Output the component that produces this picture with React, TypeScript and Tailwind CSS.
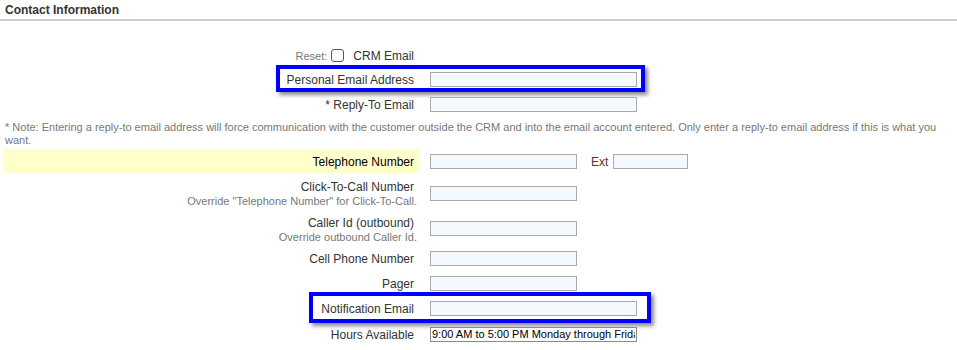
import React from "react";

const inputBase =
  "block h-[15px] border border-[#a9a9a9] bg-[#f4f9fd] outline-none";

function Field({ w = 207 }: { w?: number }) {
  return (
    <input
      className={inputBase + (w === 207 ? " w-[207px]" : w === 147 ? " w-[147px]" : " w-[75px]")}
    />
  );
}

function Row({
  label,
  sub,
  children,
  className = "",
  labelClass = "text-[#333]",
  yellow = false,
}: {
  label: React.ReactNode;
  sub?: string;
  children?: React.ReactNode;
  className?: string;
  labelClass?: string;
  yellow?: boolean;
}) {
  return (
    <div className={"relative flex items-center " + className}>
      <div
        className={
          "w-[417px] h-full flex flex-col justify-center items-end pr-[6px] pt-[2px] " +
          (yellow ? "bg-[#ffffcc]" : "")
        }
      >
        <div className={"text-[12px] leading-[14px] " + labelClass}>{label}</div>
        {sub && (
          <div className="text-[11px] leading-[14px] text-[#777] mr-[-3px]">{sub}</div>
        )}
      </div>
      <div className="ml-[10px] flex items-center">{children}</div>
    </div>
  );
}

function BlueBox({ className }: { className: string }) {
  return (
    <div
      className={
        "absolute pointer-events-none border-[4px] border-[#0000ff] shadow-[3px_3px_4px_rgba(0,0,0,0.45)] " +
        className
      }
    />
  );
}

export default function App() {
  return (
    <div className="w-[957px] h-[350px] bg-white overflow-hidden font-['Liberation_Sans',Arial,sans-serif]">
      <div className="border-b-2 border-[#cccccc] h-[21px] pl-[5px] pt-[3px]">
        <div className="text-[12px] leading-[14px] font-bold text-[#333]">Contact Information</div>
      </div>

      <div className="pl-[3px] mt-[25px]">
        <div className="relative flex items-center h-[18px]">
          <div className="w-[417px] h-full flex items-center justify-end pr-[6px] pt-[2px]">
            <span className="text-[11px] text-[#777]">Reset:</span>
            <span className="ml-[4px] mb-[2px] w-[13px] h-[13px] rounded-[3px] border border-[#555] bg-white" />
            <span className="ml-[9px] text-[12px] text-[#333]">CRM Email</span>
          </div>
        </div>

        <Row label="Personal Email Address" className="h-[30px]">
          <Field />
          <BlueBox className="left-[273px] top-[1px] w-[369px] h-[27px]" />
        </Row>

        <Row label="* Reply-To Email" className="h-[20px]">
          <Field />
        </Row>
      </div>

      <div className="mt-[7px] pl-[5px] pr-[18px] text-[11px] leading-[13px] text-[#777]">
        * Note: Entering a reply-to email address will force communication with the customer outside the CRM and into the email account entered. Only enter a reply-to email address if this is what you want.
      </div>

      <div className="pl-[3px]">
        <Row
          label="Telephone Number"
          className="mt-[2px] h-[24px]"
          labelClass="text-[#000]"
          yellow
        >
          <Field w={147} />
          <span className="ml-[14px] mr-[5px] pt-[2px] text-[12px] text-[#6e2c2c]">Ext</span>
          <Field w={75} />
        </Row>

        <Row
          label="Click-To-Call Number"
          sub={'Override "Telephone Number" for Click-To-Call.'}
          className="mt-[5px] h-[30px]"
        >
          <Field w={147} />
        </Row>

        <Row
          label="Caller Id (outbound)"
          sub="Override outbound Caller Id."
          className="mt-[6px] h-[29px]"
        >
          <Field w={147} />
        </Row>

        <Row label="Cell Phone Number" className="mt-[6px] h-[18px]">
          <Field w={147} />
        </Row>

        <Row label="Pager" className="mt-[7px] h-[18px]">
          <Field w={147} />
        </Row>

        <Row label="Notification Email" className="mt-[7px] h-[18px]">
          <Field />
          <BlueBox className="left-[306px] top-[-7px] w-[342px] h-[31px]" />
        </Row>

        <Row label="Hours Available" className="mt-[8px] h-[18px]">
          <input
            readOnly
            defaultValue="9:00 AM to 5:00 PM Monday through Friday"
            className="block h-[15px] w-[207px] border border-[#8a8a8a] bg-white px-[1px] text-[11px] leading-[13px] text-black outline-none font-['Liberation_Sans',Arial,sans-serif]"
          />
        </Row>
      </div>
    </div>
  );
}
